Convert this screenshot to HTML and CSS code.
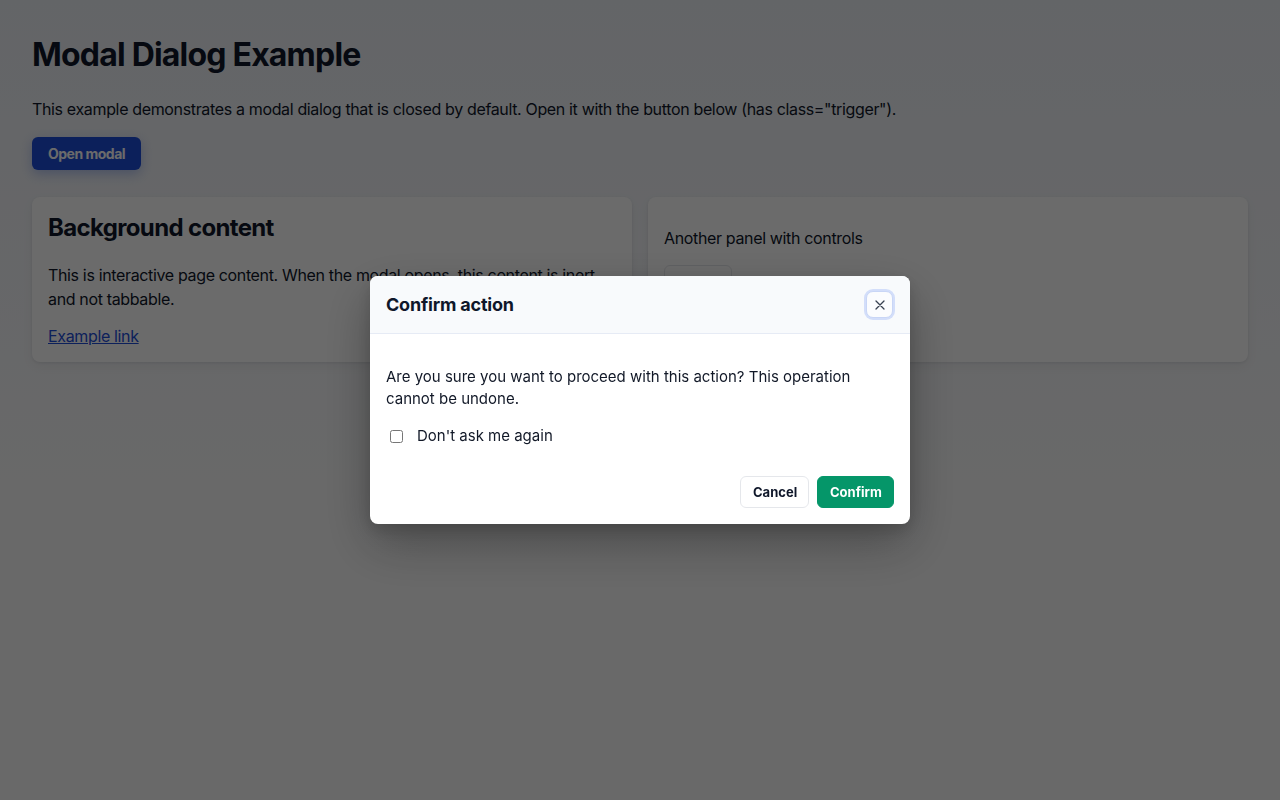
FILE: index.html
```html
<!DOCTYPE html>
<html lang="en">
<head>
  <meta charset="UTF-8" />
  <meta name="viewport" content="width=device-width, initial-scale=1.0" />
  <title>Modal Dialog Example</title>
  <link rel="stylesheet" href="styles.css">
</head>
<body>
  <main class="page" inert>
    <h1>Modal Dialog Example</h1>
    <p class="lead">This example demonstrates a modal dialog that is closed by default. Open it with the button below (has class="trigger").</p>
    <button class="btn btn-primary trigger">Open modal</button>

    <div class="panels">
      <section class="panel">
        <h2>Background content</h2>
        <p>This is interactive page content. When the modal opens, this content is inert and not tabbable.</p>
        <a href="#" class="link">Example link</a>
      </section>
      <section class="panel">
        <p class="panel-text">Another panel with controls</p>
        <button class="btn btn-outline">Button</button>
      </section>
    </div>
  </main>

  <!-- Modal -->
  <div class="backdrop">
    <div class="modal" role="dialog" aria-modal="true" aria-labelledby="modalTitle">
      <header class="modal-head">
        <h3 id="modalTitle">Confirm action</h3>
        <button class="close" aria-label="Close">
          <svg width="10" height="10" viewBox="0 0 10 10" aria-hidden="true">
            <path d="M1 1 L9 9 M9 1 L1 9" stroke="currentColor" stroke-width="1.3" stroke-linecap="round" fill="none"/>
          </svg>
        </button>
      </header>
      <div class="modal-body">
        <p>Are you sure you want to proceed with this action? This operation cannot be undone.</p>
        <label class="check"><input type="checkbox" /> Don't ask me again</label>
      </div>
      <footer class="modal-foot">
        <button class="btn btn-light">Cancel</button>
        <button class="btn btn-green">Confirm</button>
      </footer>
    </div>
  </div>
</body>
</html>
```

FILE: styles.css
```css
/* ---------- Base ---------- */
*, *::before, *::after { box-sizing: border-box; margin: 0; padding: 0; }
body {
  font-family: Inter, "Noto Sans", sans-serif;
  background: linear-gradient(#edf0f6, #fbfbfb 70%);
  color: #0f172a;
  height: 100vh;
}

/* ---------- Page ---------- */
.page { padding: 35px 32px 32px; }
h1 { font-size: 32px; line-height: 40px; font-weight: 700; margin-bottom: 22px; letter-spacing: -0.8px; }
.lead { font-size: 16px; line-height: 24px; margin-bottom: 16px; letter-spacing: -0.35px; }

.btn {
  font-family: inherit; font-weight: 700; font-size: 13px;
  border-radius: 6px; cursor: pointer; height: 32px; padding: 0 12px;
}
.btn-primary {
  background: #1d4ed8; color: #fff; border: none;
  font-size: 14px; height: 33px; padding: 0 16px; letter-spacing: -0.5px;
  box-shadow: 0 4px 12px rgba(29, 78, 216, .3);
}

.panels {
  display: grid; grid-template-columns: 1fr 1fr; gap: 16px;
  margin-top: 27px; align-items: stretch;
}
.panel {
  background: #fff; border-radius: 8px; padding: 16px 16px 14px;
  box-shadow: 0 1px 3px rgba(15, 23, 42, .08), 0 4px 12px rgba(15, 23, 42, .05);
}
.panel h2 { font-size: 24px; line-height: 30px; font-weight: 700; margin-bottom: 20px; letter-spacing: -0.65px; }
.panel p { font-size: 16px; line-height: 24px; margin-bottom: 13px; letter-spacing: -0.35px; }
.panel .panel-text { margin-top: 13px; margin-bottom: 15px; }
.link { color: #1d4ed8; font-size: 16px; line-height: 24px; text-decoration: underline; letter-spacing: -0.35px; }
.btn-outline {
  background: #fff; border: 1px solid #e5e7eb; color: #111827;
  width: 68px; height: 40px; font-size: 14px;
}

/* ---------- Modal ---------- */
.backdrop {
  position: fixed; inset: 0;
  background: rgba(0, 0, 0, .58);
  display: flex; align-items: center; justify-content: center;
}
.modal {
  width: 540px; background: #fff; border-radius: 8px; overflow: hidden;
  box-shadow: 0 20px 50px rgba(0, 0, 0, .3), 0 6px 16px rgba(0, 0, 0, .15);
}
.modal-head {
  display: flex; align-items: center; justify-content: space-between;
  height: 58px; padding: 0 16px; background: #f8fafc; border-bottom: 1px solid #e6ebf5;
}
.modal-head h3 { font-size: 18px; line-height: 24px; font-weight: 700; color: #0f172a; letter-spacing: -0.2px; }
.close {
  width: 27px; height: 27px; border-radius: 7px; margin-right: 1px;
  border: 1px solid #c9d6f6; background: #fbfcfe; color: #374151;
  display: flex; align-items: center; justify-content: center;
  box-shadow: 0 0 0 2px #d3defa; cursor: pointer;
}
.modal-body { padding: 32px 16px 30px; }
.modal-body p { font-size: 15px; line-height: 22px; color: #111827; margin-bottom: 16px; }
.check {
  display: flex; align-items: center; font-size: 15px; line-height: 20px; color: #111827;
}
.check input { width: 13px; height: 13px; margin: 0 14px 0 4px; }
.modal-foot { display: flex; justify-content: flex-end; gap: 8px; padding: 0 16px 16px; }
.btn-light { background: #fff; border: 1px solid #e5e7eb; color: #0f172a; width: 69px; }
.btn-green { background: #059669; border: 1px solid #059669; color: #fff; width: 77px; }
```
